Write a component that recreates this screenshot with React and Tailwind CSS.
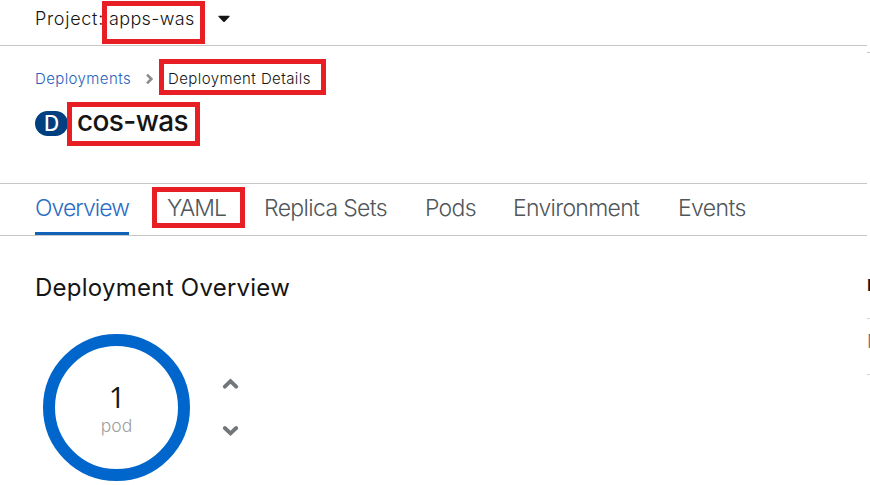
const tabs = [
  { label: "Overview", cls: "w-[94px] mr-[38px] text-[#2b6cc4] tracking-[-0.95px]" },
  { label: "YAML", cls: "w-[60px] mr-[37px] text-[#51565b] tracking-[-0.9px]" },
  { label: "Replica Sets", cls: "w-[123px] mr-[38px] text-[#51565b] tracking-[-0.65px]" },
  { label: "Pods", cls: "w-[50px] mr-[38px] text-[#51565b] tracking-[-0.7px]" },
  { label: "Environment", cls: "w-[127px] mr-[38px] text-[#51565b] tracking-[-0.7px]" },
  { label: "Events", cls: "w-[68px] text-[#51565b] tracking-[-0.6px]" },
];

const highlights = [
  "left-[102px] top-px w-[103px] h-[43px]",
  "left-[159px] top-[59px] w-[167px] h-[36px]",
  "left-[67px] top-[102px] w-[133px] h-[44px]",
  "left-[152px] top-[187px] w-[93px] h-[41px]",
];

function Chevron({ d, className, viewBox }) {
  return (
    <svg className={className} viewBox={viewBox} fill="none" stroke="currentColor">
      <path d={d} />
    </svg>
  );
}

function ProjectBar() {
  return (
    <header className="flex h-[46px] items-start border-b border-[#c7c7c7] pl-[35px] pt-[6px] text-[18px] leading-[26px] font-light text-[#151515]">
      <span className="w-[74px] whitespace-nowrap tracking-[0.7px]">Project:</span>
      <span className="w-[109px] whitespace-nowrap tracking-[0.35px]">apps-was</span>
      <svg className="mt-[9px] h-[8px] w-[12px]" viewBox="0 0 12 8">
        <path d="M0.8 0.8H11.2Q12.2 1 11.2 2L6.7 6.8Q6 7.4 5.3 6.8L0.8 2Q-0.2 1 0.8 0.8Z" fill="#151515" />
      </svg>
    </header>
  );
}

function Heading() {
  return (
    <section className="h-[138px] border-b border-[#c7c7c7] pl-[35px] pt-[23px]">
      <nav className="flex h-[20px] items-center text-[15px] leading-[20px] whitespace-nowrap">
        <span className="w-[110px] font-light tracking-[0.4px] text-[#1f62bb]">Deployments</span>
        <Chevron className="h-[12px] w-[9px] stroke-[2.6] text-[#8a8d90]" viewBox="0 0 9 12" d="M2 1.6L6.4 6L2 10.4" />
        <span className="ml-[14px] font-light tracking-[0.42px] text-[#151515]">Deployment Details</span>
      </nav>
      <div className="mt-[15px] flex h-[34px] items-center">
        <span className="mt-[4px] flex h-[25px] w-[33px] items-center justify-center rounded-full bg-[#004080] text-[21px] leading-none font-medium text-white">D</span>
        <h1 className="ml-[9px] text-[28px] leading-[34px] font-medium tracking-[-0.6px] whitespace-nowrap text-[#151515]">cos-was</h1>
      </div>
    </section>
  );
}

function Tabs() {
  return (
    <nav className="flex h-[52px] border-b border-[#c7c7c7] pl-[35px] text-[23px] leading-[48px] font-light">
      {tabs.map((tab, i) => (
        <div key={tab.label} className={`h-[51px] whitespace-nowrap ${i === 0 ? "border-b-[3px] border-[#0f62b8]" : ""} ${tab.cls}`}>
          {tab.label}
        </div>
      ))}
    </nav>
  );
}

function Overview() {
  return (
    <section className="pl-[35px] pt-[35px]">
      <h2 className="h-[34px] text-[24px] leading-[34px] tracking-[0.25px] whitespace-nowrap text-[#151515]">Deployment Overview</h2>
      <div className="ml-[8px] mt-[29px] flex">
        <div className="flex h-[147px] w-[147px] flex-col items-center rounded-full border-[12.5px] border-[#0066cc] pt-[33px]">
          <span className="ml-px font-['Open_Sans'] text-[29px] leading-[36px] text-[#151515]">1</span>
          <span className="text-[17.5px] leading-[22px] font-light text-[#a0a0a0]">pod</span>
        </div>
        <div className="ml-[32px] mt-[44px] flex flex-col gap-[35px] text-[#737679]">
          <Chevron className="h-[12px] w-[17px] stroke-[3.9] [stroke-linecap:round]" viewBox="0 0 17 12" d="M2.8 8.6L8.5 3.2L14.2 8.6" />
          <Chevron className="h-[12px] w-[17px] stroke-[3.9] [stroke-linecap:round]" viewBox="0 0 17 12" d="M2.8 3L8.5 8.4L14.2 3" />
        </div>
      </div>
    </section>
  );
}

function Aside() {
  return (
    <aside className="w-[3px] overflow-hidden whitespace-nowrap">
      <div className="h-[53px] border-b border-[#c7c7c7]" />
      <div className="h-[266px] border-b border-[#d2d2d2] pt-[222px] text-[16px] leading-[20px] font-semibold text-[#151515]">L</div>
      <div className="h-[56px] border-b border-[#d2d2d2] pt-[13px] text-[18px] leading-[20px] font-light text-[#6a6e73]">N</div>
    </aside>
  );
}

export default function App() {
  return (
    <div className="relative flex h-[485px] w-[870px] overflow-hidden bg-white font-[Inter,sans-serif]">
      <main className="w-[867px]">
        <ProjectBar />
        <Heading />
        <Tabs />
        <Overview />
      </main>
      <Aside />
      {highlights.map((box) => (
        <div key={box} className={`absolute border-[5px] border-[#e81e25] ${box}`} />
      ))}
    </div>
  );
}
